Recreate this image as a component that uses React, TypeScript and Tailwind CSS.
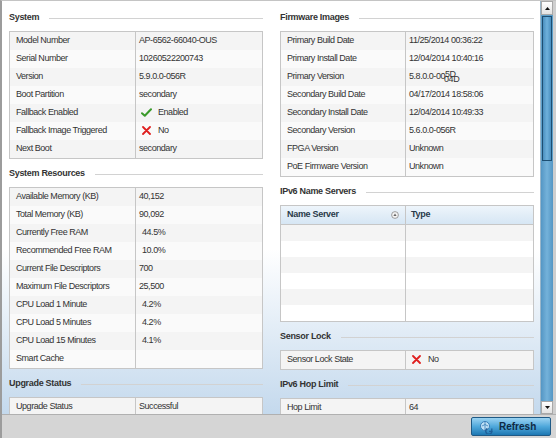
import { FC, ReactNode } from "react";

type Row = { label: string; value: ReactNode };

const Check = () => (
  <svg width="11" height="9" viewBox="0 0 11 9" className="mr-[6px] shrink-0">
    <path d="M1 5.2 L3.8 7.8 L10 1.2" fill="none" stroke="#3a9a2a" strokeWidth="2" strokeLinecap="round" strokeLinejoin="round" />
  </svg>
);

const Cross = () => (
  <svg width="9" height="9" viewBox="0 0 9 9" className="mr-[7px] shrink-0">
    <path d="M1 1 L8 8 M8 1 L1 8" stroke="#e02020" strokeWidth="1.8" strokeLinecap="round" />
  </svg>
);

const system: Row[] = [
  { label: "Model Number", value: "AP-6562-66040-OUS" },
  { label: "Serial Number", value: "10260522200743" },
  { label: "Version", value: "5.9.0.0-056R" },
  { label: "Boot Partition", value: "secondary" },
  { label: "Fallback Enabled", value: <span className="flex items-center pl-[2px]"><Check />Enabled</span> },
  { label: "Fallback Image Triggered", value: <span className="flex items-center pl-[3px]"><Cross />No</span> },
  { label: "Next Boot", value: "secondary" },
];

const resources: Row[] = [
  { label: "Available Memory (KB)", value: "40,152" },
  { label: "Total Memory (KB)", value: "90,092" },
  { label: "Currently Free RAM", value: <span className="pl-[3px]">44.5%</span> },
  { label: "Recommended Free RAM", value: <span className="pl-[3px]">10.0%</span> },
  { label: "Current File Descriptors", value: "700" },
  { label: "Maximum File Descriptors", value: "25,500" },
  { label: "CPU Load 1 Minute", value: <span className="pl-[3px]">4.2%</span> },
  { label: "CPU Load 5 Minutes", value: <span className="pl-[3px]">4.2%</span> },
  { label: "CPU Load 15 Minutes", value: <span className="pl-[3px]">4.1%</span> },
  { label: "Smart Cache", value: "" },
];

const firmware: Row[] = [
  { label: "Primary Build Date", value: "11/25/2014 00:36:22" },
  { label: "Primary Install Date", value: "12/04/2014 10:40:16" },
  {
    label: "Primary Version",
    value: (
      <span className="flex">
        5.8.0.0-00
        <span className="relative inline-block w-[20px]">
          <span className="absolute left-0 top-[-2px]">5D</span>
          <span className="absolute left-[-1px] top-[3px]">04D</span>
        </span>
      </span>
    ),
  },
  { label: "Secondary Build Date", value: "04/17/2014 18:58:06" },
  { label: "Secondary Install Date", value: "12/04/2014 10:49:33" },
  { label: "Secondary Version", value: "5.6.0.0-056R" },
  { label: "FPGA Version", value: "Unknown" },
  { label: "PoE Firmware Version", value: "Unknown" },
];

const Heading: FC<{ title: string; first?: boolean }> = ({ title, first }) => (
  <div className={`flex items-center h-[14px] mb-[6px] ${first ? "" : "mt-[8px]"}`}>
    <span className="font-bold text-[#333] pr-[10px] whitespace-nowrap tracking-[-0.3px]">{title}</span>
    <div className="flex-1 h-px bg-[#d2d2d2]" />
  </div>
);

const KvTable: FC<{ rows: Row[]; labelW?: string }> = ({ rows, labelW = "w-[126px]" }) => (
  <div className="border border-[#c6c6c6] bg-white">
    {rows.map((r, i) => (
      <div key={r.label} className={`flex h-[18px] ${i % 2 === 0 ? "bg-[#f4f4f4]" : "bg-[#fafafa]"}`}>
        <div className={`${labelW} shrink-0 pl-[6px] flex items-center border-r border-[#c6c6c6] text-[#333] whitespace-nowrap`}>
          {r.label}
        </div>
        <div className="flex-1 pl-[3px] flex items-center pb-[1px] text-[#333] whitespace-nowrap">{r.value}</div>
      </div>
    ))}
  </div>
);

const SortIcon = () => (
  <svg width="8" height="8" viewBox="0 0 8 8">
    <circle cx="4" cy="4" r="3.4" fill="#f4f4f4" stroke="#8a8a8a" strokeWidth="0.8" />
    <path d="M2.4 5 L4 2.6 L5.6 5 Z" fill="#666" />
  </svg>
);

const NameServers = () => (
  <div className="border border-[#c6c6c6] bg-white">
    <div className="flex h-[19px] bg-linear-to-b from-[#eef5fb] to-[#d6e6f4] border-b border-[#c6c6c6] font-bold text-[#2a3a4a] tracking-[-0.3px]">
      <div className="w-[125px] shrink-0 pl-[6px] pr-[6px] flex items-center justify-between border-r border-[#c6c6c6]">
        Name Server
        <SortIcon />
      </div>
      <div className="flex-1 pl-[5px] flex items-center">Type</div>
    </div>
    {[0, 1, 2, 3, 4, 5].map((i) => (
      <div key={i} className={`flex h-[16px] ${i % 2 === 0 ? "bg-[#f4f4f4]" : "bg-white"}`}>
        <div className="w-[125px] shrink-0 border-r border-[#c6c6c6]" />
        <div className="flex-1" />
      </div>
    ))}
  </div>
);

const Scrollbar = () => (
  <div className="w-[13px] shrink-0 flex flex-col bg-[#5d9fc9] border-l border-[#9ab6ca]">
    <div className="h-[14px] bg-linear-to-b from-white to-[#e2e2e2] border border-[#a8a8a8] flex items-center justify-center">
      <svg width="5" height="3" viewBox="0 0 5 3"><path d="M0 3 L2.5 0 L5 3 Z" fill="#111" /></svg>
    </div>
    <div className="h-[145px] mt-px mx-px border border-[#1d4e72] bg-linear-to-r from-[#4a8fbf] via-[#6eb1dc] to-[#4a8fbf]" />
    <div className="flex-1 bg-linear-to-r from-[#5496c4] via-[#74b2da] to-[#5496c4]" />
    <div className="h-[13px] bg-linear-to-b from-white to-[#e2e2e2] border border-[#a8a8a8] flex items-center justify-center">
      <svg width="5" height="3" viewBox="0 0 5 3"><path d="M0 0 L2.5 3 L5 0 Z" fill="#111" /></svg>
    </div>
  </div>
);

const RefreshIcon = () => (
  <svg width="14" height="14" viewBox="0 0 14 14" className="mr-[6px]">
    <circle cx="6" cy="6" r="4.5" fill="#bfe0f5" stroke="#3a7fb8" strokeWidth="1" />
    <path d="M3 6 Q6 3 9 6" fill="none" stroke="#3a7fb8" strokeWidth="0.8" />
    <path d="M6 1.5 V10.5" stroke="#3a7fb8" strokeWidth="0.8" />
    <path d="M8.5 8.5 A3 3 0 1 0 12.8 11" fill="none" stroke="#1f5f99" strokeWidth="1.4" />
    <path d="M12.8 8.6 V11.4 H10" fill="none" stroke="#1f5f99" strokeWidth="1.2" />
  </svg>
);

export default function App() {
  return (
    <div
      className="w-[556px] h-[438px] flex flex-col overflow-hidden border-l-2 border-t border-l-[#9c9c9c] border-t-[#c4c4c4] bg-[#cfcfcf] text-[9px] tracking-[-0.45px]"
      style={{ fontFamily: '"Liberation Sans", Arial, sans-serif' }}
    >
      <div className="flex flex-1 min-h-0">
        <div className="flex-1 min-w-0 overflow-hidden bg-linear-to-b from-white from-60% to-[#c4d9ed] pl-[7px] pr-[4px] pt-[10px] flex gap-[17px]">
          <div className="w-[254px] shrink-0">
            <Heading title="System" first />
            <KvTable rows={system} />
            <Heading title="System Resources" />
            <KvTable rows={resources} />
            <Heading title="Upgrade Status" />
            <KvTable rows={[{ label: "Upgrade Status", value: "Successful" }]} />
          </div>
          <div className="w-[254px] shrink-0">
            <Heading title="Firmware Images" first />
            <KvTable rows={firmware} labelW="w-[125px]" />
            <Heading title="IPv6 Name Servers" />
            <NameServers />
            <Heading title="Sensor Lock" />
            <KvTable
              rows={[{ label: "Sensor Lock State", value: <span className="flex items-center pl-[3px]"><Cross />No</span> }]}
              labelW="w-[125px]"
            />
            <Heading title="IPv6 Hop Limit" />
            <KvTable rows={[{ label: "Hop Limit", value: "64" }]} labelW="w-[125px]" />
          </div>
        </div>
        <Scrollbar />
        <div className="w-[3px] shrink-0 bg-[#cfcfcf]" />
      </div>
      <div className="h-[24px] shrink-0 bg-[#d5d5d5] border-t border-[#b0b0b0] flex items-center justify-end pr-[5px]">
        <button className="h-[19px] w-[80px] rounded-[2px] border border-[#1f5a86] bg-linear-to-b from-[#9ad3f2] via-[#4ea8db] to-[#1c78b3] flex items-center pl-[7px] text-[10px] font-bold tracking-normal text-[#102a44]">
          <RefreshIcon />
          Refresh
        </button>
      </div>
    </div>
  );
}
